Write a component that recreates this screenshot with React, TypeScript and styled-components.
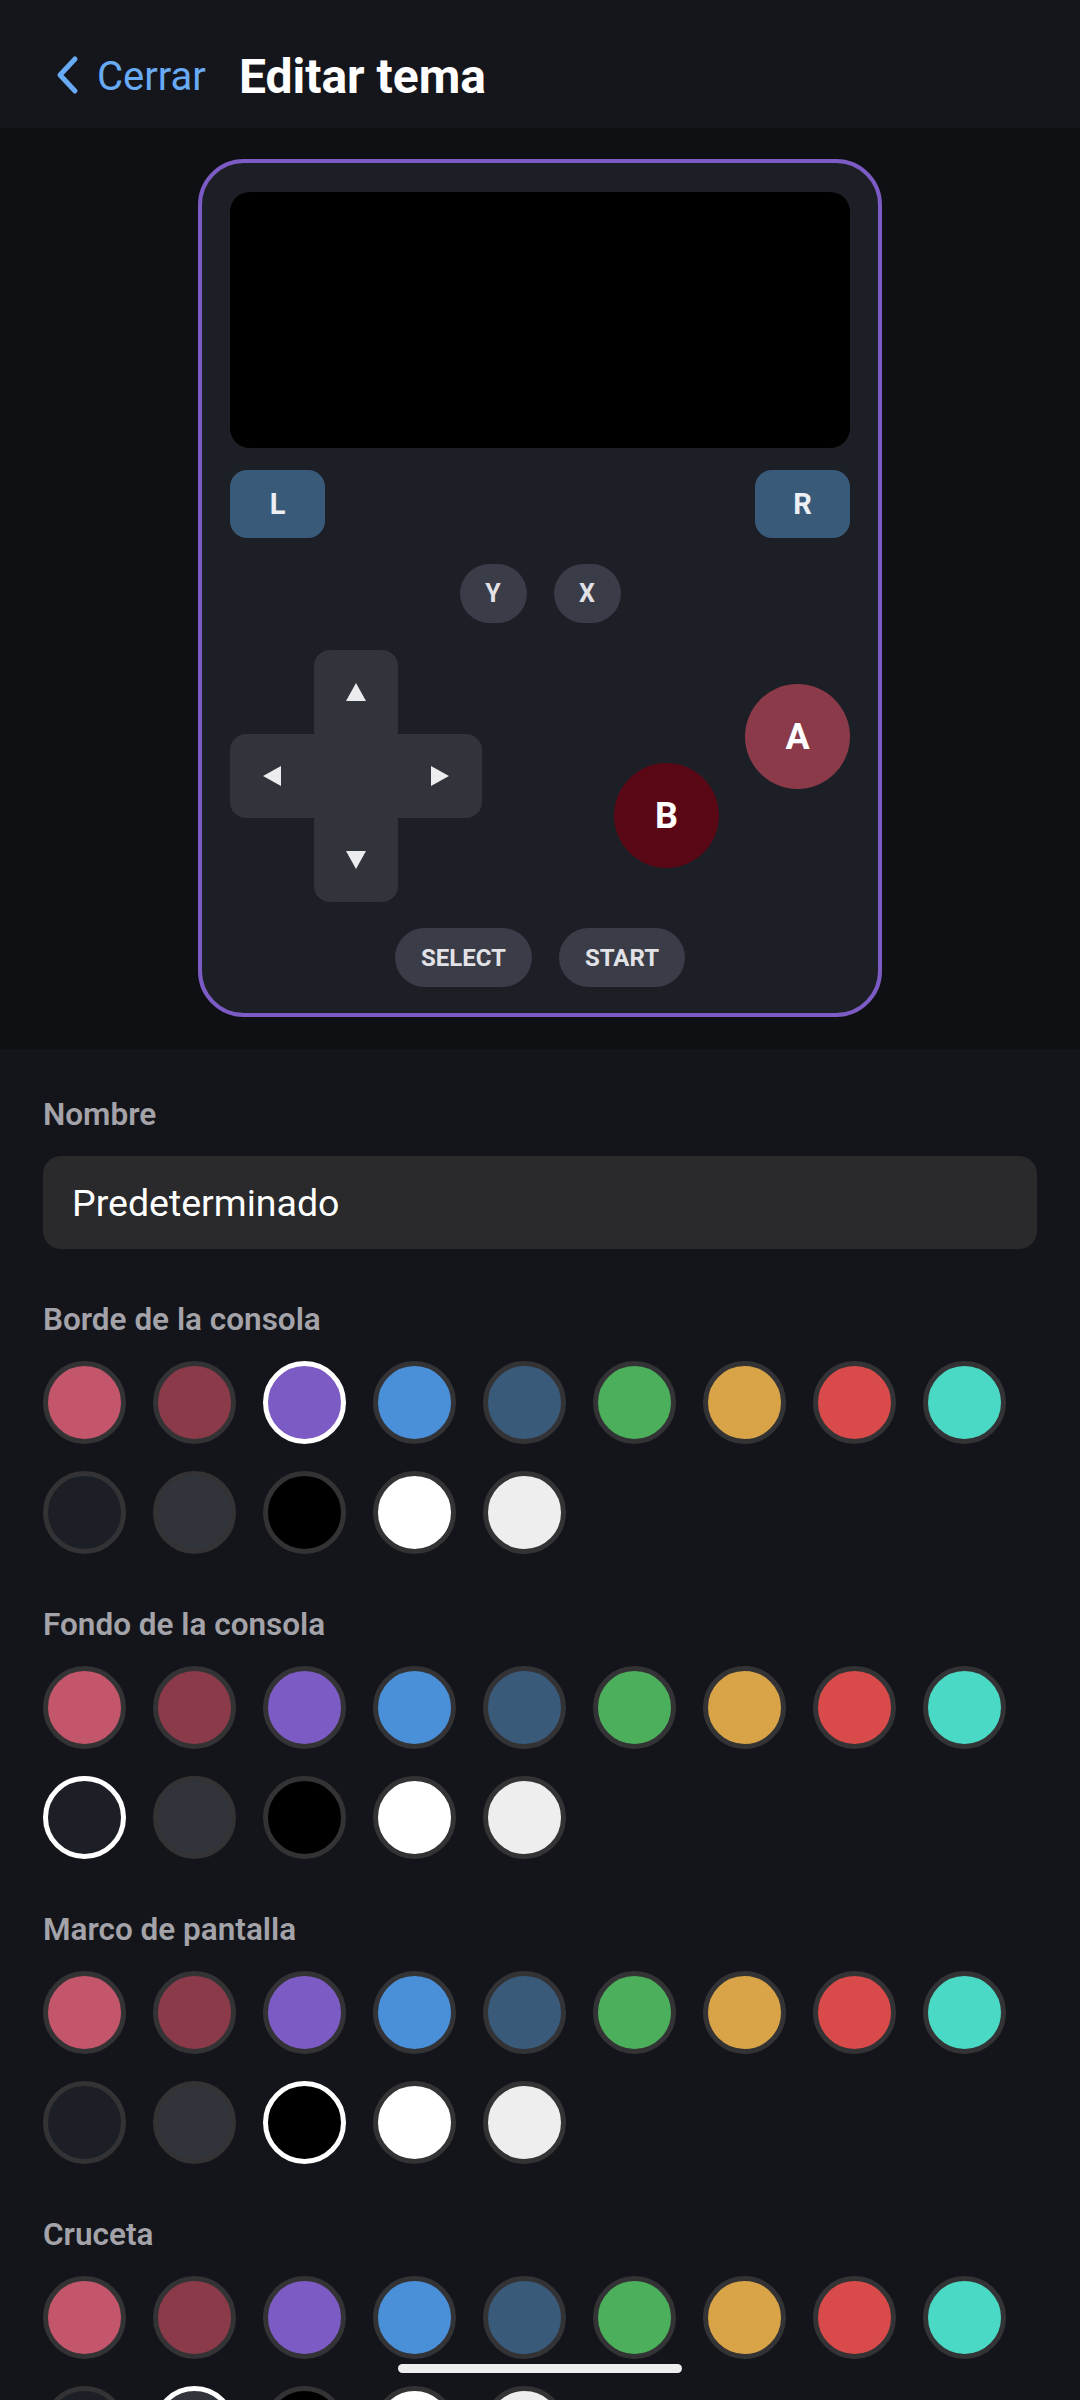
import React from "react"
import styled, { createGlobalStyle } from "styled-components"

const GlobalStyle = createGlobalStyle`
  html, body {
    margin: 0;
    padding: 0;
    background: #14151a;
  }
  body {
    font-family: Roboto, "Noto Sans", "Liberation Sans", sans-serif;
  }
  * {
    box-sizing: border-box;
  }
`

const palette = [
  "#c4566c",
  "#8b3a4a",
  "#7c5cc4",
  "#4a90d9",
  "#3a5a7a",
  "#4caf5c",
  "#d9a347",
  "#d94a4a",
  "#4ad9c4",
  "#1c1f26",
  "#32343c",
  "#000000",
  "#ffffff",
  "#eeeeee",
]

const sections = [
  { title: "Borde de la consola", selected: 2 },
  { title: "Fondo de la consola", selected: 9 },
  { title: "Marco de pantalla", selected: 11 },
  { title: "Cruceta", selected: 10 },
]

const Page = styled.div`
  height: 2400px;
  overflow: hidden;
  background: #14151a;
`

const Header = styled.header`
  display: flex;
  align-items: center;
  height: 128px;
  padding: 25px 0 0 56px;
  background: #15161b;
`

const BackButton = styled.button`
  display: flex;
  align-items: center;
  gap: 17px;
  padding: 0;
  border: none;
  background: none;
  color: #68abf4;
  font-family: inherit;
  font-size: 40px;
  line-height: 47px;
  cursor: pointer;
`

const Chevron = styled.svg`
  margin-top: -4px;
`

const Title = styled.h1`
  margin: 0 0 0 33px;
  color: #ffffff;
  font-size: 48px;
  line-height: 56px;
  font-weight: 700;
`

const Preview = styled.section`
  display: flex;
  justify-content: center;
  padding: 31px 0 32px;
  background: #0f1014;
`

const Console = styled.div<{ $border: string; $bg: string }>`
  display: flex;
  flex-direction: column;
  width: 684px;
  padding: 29px 28px 26px;
  border: 4px solid ${({ $border }) => $border};
  border-radius: 46px;
  background: ${({ $bg }) => $bg};
`

const Screen = styled.div<{ $color: string }>`
  height: 256px;
  border-radius: 20px;
  background: ${({ $color }) => $color};
`

const ShoulderRow = styled.div`
  display: flex;
  justify-content: space-between;
  margin-top: 22px;
`

const Shoulder = styled.div`
  display: grid;
  place-items: center;
  width: 95px;
  height: 68px;
  border-radius: 17px;
  background: #3a5a7a;
  color: #eceff3;
  font-size: 29px;
  font-weight: 700;
`

const CenterRow = styled.div<{ $top: number }>`
  display: flex;
  justify-content: center;
  gap: 27px;
  margin-top: ${({ $top }) => $top}px;
`

const Pill = styled.div<{ $width?: number }>`
  display: grid;
  place-items: center;
  min-width: ${({ $width }) => $width ?? 67}px;
  height: 59px;
  padding: 0 26px;
  border-radius: 30px;
  background: #3a3c48;
  color: #e2e2e6;
  font-size: 24px;
  font-weight: 700;
`

const SmallPill = styled(Pill)`
  padding: 0;
  font-size: 25px;
`

const ControlRow = styled.div`
  display: flex;
  justify-content: space-between;
  height: 252px;
  margin-top: 27px;
`

const Dpad = styled.div`
  display: grid;
  grid-template-columns: repeat(3, 84px);
  grid-template-rows: repeat(3, 84px);
`

const DpadCell = styled.div<{ $col: number; $row: number; $radius: string; $color: string }>`
  display: grid;
  place-items: center;
  grid-column: ${({ $col }) => $col};
  grid-row: ${({ $row }) => $row};
  border-radius: ${({ $radius }) => $radius};
  background: ${({ $color }) => $color};
`

const FaceGroup = styled.div`
  display: flex;
  gap: 26px;
`

const FaceButton = styled.div<{ $color: string; $up?: boolean }>`
  display: grid;
  place-items: center;
  width: 105px;
  height: 105px;
  border-radius: 50%;
  background: ${({ $color }) => $color};
  color: #ffffff;
  font-size: 36px;
  font-weight: 700;
  align-self: ${({ $up }) => ($up ? "flex-start" : "flex-end")};
  margin: ${({ $up }) => ($up ? "34px 0 0" : "0 0 34px")};
`

const Form = styled.div`
  padding: 47px 43px 0;
`

const Field = styled.div`
  & + & {
    margin-top: 52px;
  }
`

const Label = styled.div`
  margin-bottom: 23px;
  color: #a3a3a9;
  font-size: 31.5px;
  line-height: 37px;
  font-weight: 600;
`

const NameInput = styled.input`
  display: block;
  width: 100%;
  height: 93px;
  padding: 0 29px;
  border: none;
  border-radius: 18px;
  outline: none;
  background: #2a2a2c;
  color: #ffffff;
  font-family: inherit;
  font-size: 37.5px;
`

const SwatchGrid = styled.div`
  display: flex;
  flex-wrap: wrap;
  gap: 27px;
`

const Swatch = styled.button<{ $color: string; $selected: boolean }>`
  width: 83px;
  height: 83px;
  padding: 0;
  border-radius: 50%;
  border: 5px solid ${({ $selected }) => ($selected ? "#ffffff" : "#333335")};
  background: ${({ $color }) => $color};
  cursor: pointer;
`

const HomeBar = styled.div`
  position: fixed;
  left: 50%;
  bottom: 27px;
  width: 284px;
  height: 9px;
  margin-left: -142px;
  border-radius: 5px;
  background: #eeeeee;
`

type Dir = "up" | "down" | "left" | "right"

const arrowPoints: Record<Dir, string> = {
  up: "10,0 20,18 0,18",
  down: "0,0 20,0 10,18",
  left: "18,0 18,20 0,10",
  right: "0,0 18,10 0,20",
}

const Arrow = ({ dir }: { dir: Dir }): JSX.Element => {
  const vertical = dir === "up" || dir === "down"
  return (
    <svg width={vertical ? 20 : 18} height={vertical ? 18 : 20} viewBox={vertical ? "0 0 20 18" : "0 0 18 20"}>
      <polygon points={arrowPoints[dir]} fill="#ececee" />
    </svg>
  )
}

const DpadView = ({ color }: { color: string }): JSX.Element => (
  <Dpad>
    <DpadCell $col={2} $row={1} $radius="16px 16px 0 0" $color={color}>
      <Arrow dir="up" />
    </DpadCell>
    <DpadCell $col={1} $row={2} $radius="16px 0 0 16px" $color={color}>
      <Arrow dir="left" />
    </DpadCell>
    <DpadCell $col={2} $row={2} $radius="0" $color={color} />
    <DpadCell $col={3} $row={2} $radius="0 16px 16px 0" $color={color}>
      <Arrow dir="right" />
    </DpadCell>
    <DpadCell $col={2} $row={3} $radius="0 0 16px 16px" $color={color}>
      <Arrow dir="down" />
    </DpadCell>
  </Dpad>
)

const ColorPicker = ({ title, selected }: { title: string; selected: number }): JSX.Element => (
  <Field>
    <Label>{title}</Label>
    <SwatchGrid>
      {palette.map((c, i) => (
        <Swatch key={c} $color={c} $selected={i === selected} aria-label={c} />
      ))}
    </SwatchGrid>
  </Field>
)

export default function App(): JSX.Element {
  return (
    <Page>
      <GlobalStyle />
      <Header>
        <BackButton>
          <Chevron width="24" height="40" viewBox="0 0 24 40">
            <path d="M19 4 L4 20 L19 36" fill="none" stroke="#68abf4" strokeWidth="5" strokeLinecap="round" strokeLinejoin="round" />
          </Chevron>
          Cerrar
        </BackButton>
        <Title>Editar tema</Title>
      </Header>

      <Preview>
        <Console $border={palette[sections[0].selected]} $bg={palette[sections[1].selected]}>
          <Screen $color={palette[sections[2].selected]} />
          <ShoulderRow>
            <Shoulder>L</Shoulder>
            <Shoulder>R</Shoulder>
          </ShoulderRow>
          <CenterRow $top={26}>
            <SmallPill>Y</SmallPill>
            <SmallPill>X</SmallPill>
          </CenterRow>
          <ControlRow>
            <DpadView color={palette[sections[3].selected]} />
            <FaceGroup>
              <FaceButton $color="#5a0815">B</FaceButton>
              <FaceButton $color="#8b3a4a" $up>
                A
              </FaceButton>
            </FaceGroup>
          </ControlRow>
          <CenterRow $top={26}>
            <Pill>SELECT</Pill>
            <Pill>START</Pill>
          </CenterRow>
        </Console>
      </Preview>

      <Form>
        <Field>
          <Label>Nombre</Label>
          <NameInput defaultValue="Predeterminado" />
        </Field>
        {sections.map((s) => (
          <ColorPicker key={s.title} title={s.title} selected={s.selected} />
        ))}
      </Form>

      <HomeBar />
    </Page>
  )
}
